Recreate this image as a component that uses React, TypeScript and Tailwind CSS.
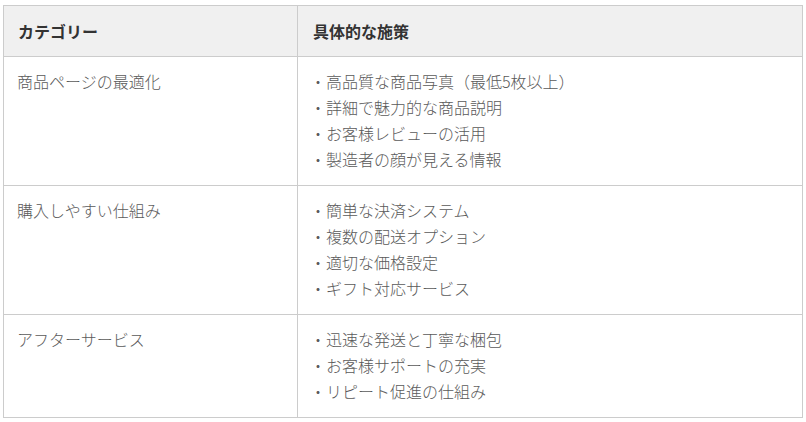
import React from "react";

const rows = [
  {
    cat: "商品ページの最適化",
    items: ["高品質な商品写真（最低5枚以上）", "詳細で魅力的な商品説明", "お客様レビューの活用", "製造者の顔が見える情報"],
  },
  {
    cat: "購入しやすい仕組み",
    items: ["簡単な決済システム", "複数の配送オプション", "適切な価格設定", "ギフト対応サービス"],
  },
  {
    cat: "アフターサービス",
    items: ["迅速な発送と丁寧な梱包", "お客様サポートの充実", "リピート促進の仕組み"],
  },
];

export default function App() {
  return (
    <div
      className="bg-white w-[806px] h-[422px] pt-[5px] pl-[3px]"
      style={{ fontFamily: '"Noto Sans CJK JP", "Noto Sans", sans-serif' }}
    >
      <table className="w-[800px] border-collapse text-[16px] leading-[26px]">
        <thead>
          <tr className="bg-[#f0f0f0]">
            <th className="border border-[#cccccc] text-left font-bold text-[#333333] px-[14px] py-[12px] w-[294px] h-[51px]">
              カテゴリー
            </th>
            <th className="border border-[#cccccc] text-left font-bold text-[#333333] px-[15px] py-[12px]">
              具体的な施策
            </th>
          </tr>
        </thead>
        <tbody>
          {rows.map((r) => (
            <tr key={r.cat}>
              <td className="border border-[#cccccc] align-top font-light text-[#5a5a5a] px-[13px] pt-[11px] pb-[13px]">{r.cat}</td>
              <td className="border border-[#cccccc] align-top font-light text-[#5a5a5a] px-[12px] pt-[11px] pb-[13px]">
                {r.items.map((it) => (
                  <div key={it}>・{it}</div>
                ))}
              </td>
            </tr>
          ))}
        </tbody>
      </table>
    </div>
  );
}
